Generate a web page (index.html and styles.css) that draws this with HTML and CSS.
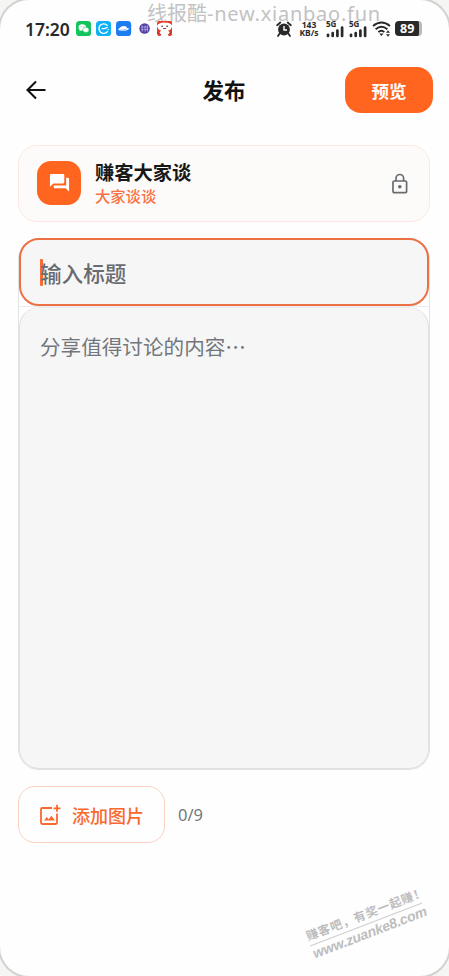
FILE: index.html
```
<!DOCTYPE html>
<html lang="zh-CN">
<head>
<meta charset="utf-8">
<title>发布</title>
<link rel="stylesheet" href="styles.css">
</head>
<body>
<div class="screen">
  <div class="site-mark">线报酷<span>-new.xianbao.fun</span></div>
  <div class="status">
    <span class="clock">17:20</span>
    <div class="apps">
      <svg viewBox="0 0 15 15"><rect width="15" height="15" rx="3.5" fill="#12c45b"/><ellipse cx="6.2" cy="6.3" rx="3.7" ry="3" fill="#fff"/><path d="M4 8l-.5 2 2-1z" fill="#fff"/><ellipse cx="9.7" cy="8.7" rx="3.1" ry="2.6" fill="#fff" stroke="#12c45b" stroke-width=".5"/><circle cx="5" cy="5.7" r=".45" fill="#12c45b"/><circle cx="7.5" cy="5.7" r=".45" fill="#12c45b"/></svg>
      <svg viewBox="0 0 15 15"><rect width="15" height="15" rx="3.5" fill="#10b0f5"/><path d="M11 4.200A4.700 4.700 0 1 0 11.300 10.500M6 7.500h2l3-1" fill="none" stroke="#fff" stroke-width="1.400" stroke-linecap="round"/><circle cx="12" cy="8.500" r=".7" fill="#fff"/></svg>
      <svg viewBox="0 0 15 15"><rect width="15" height="15" rx="3.5" fill="#1c7df2"/><path d="M2 8.500C4 6 6 5 8 5q2.500 0 3 2l2 .5c-1 2.500-8 3.500-11 1z" fill="#fff"/><path d="M4.500 8.800c3 .6 5 0 6-1" fill="none" stroke="#1c7df2" stroke-width=".6"/></svg>
      <svg viewBox="0 0 15 15"><circle cx="7.500" cy="7.500" r="5.200" fill="#5443a7"/><path d="M5.200 4.500v6M4 6h2.500M4 8.500h2.500M8 4.500v6M10.300 4.500v6M7 6h4.300M7 8.500h4" stroke="#cfc6f0" stroke-width=".6"/></svg>
      <svg viewBox="0 0 15 15"><path d="M2 0h11q2 0 2 3v9q0 3-3 3H3q-3 0-3-3V3q0-3 2-3z" fill="#e63a2c"/><path d="M0 5Q1 1.500 7.500 1.500T15 5Q14 9 11 9.500l2 2.500-2 3H4l-2-3 2-2.500Q1 9 0 5z" fill="#fff"/><circle cx="5" cy="5.200" r=".8" fill="#222"/><circle cx="10" cy="5.200" r=".8" fill="#222"/><path d="M6 7.500h3M1 11l3 3M14 11l-3 3" stroke="#c62d25"/></svg>
    </div>
    <div class="system">
      <svg class="alarm" viewBox="0 0 16 16"><circle cx="8" cy="8.500" r="5.900" fill="#292929"/><path d="M1.200 4.200L4.300 1.500M14.800 4.200L11.700 1.500M3.700 12.500L2 15M12.300 12.500L14 15" stroke="#292929" stroke-width="1.800" stroke-linecap="round"/><path d="M8 5v4h3" fill="none" stroke="#fff" stroke-width="1.400"/></svg>
      <div class="speed"><span>143</span><span>KB/s</span></div>
      <div class="signal"><span>5G</span><svg viewBox="0 0 18 12"><path d="M2 8.800v1.200M6.700 7v3M11.400 4.500V10M16.100 1.500V10" stroke="#292929" stroke-width="2.700" stroke-linecap="round"/></svg></div>
      <div class="signal"><span>5G</span><svg viewBox="0 0 18 12"><path d="M2 8.800v1.200M6.700 7v3M11.400 4.500V10M16.100 1.500V10" stroke="#292929" stroke-width="2.700" stroke-linecap="round"/></svg></div>
      <svg class="wifi" viewBox="0 0 19 16"><path d="M1 5q8.500-7 17 0M3.600 8.200q5.900-5 11.800 0M6.300 11.100q3.200-2.600 6 0" fill="none" stroke="#292929" stroke-width="1.900"/><path d="M7.300 12.600h4.200L9.400 15zM14 11.800h4L16 9.300zM14 13.200h4L16 15.700z" fill="#292929"/></svg>
      <div class="battery">89</div>
    </div>
  </div>

  <header class="header">
    <svg class="back" viewBox="0 0 22 22"><path d="M20.500 11H3M11 2.500L2.500 11l8.500 8.500" fill="none" stroke="#111" stroke-width="2.100"/></svg>
    <h1>发布</h1>
    <button class="preview">预览</button>
  </header>

  <main class="content">
    <section class="board">
      <div class="board-icon"><svg viewBox="0 0 22 22"><path d="M2.200 1h12.600q1.200 0 1.200 1.200v7.600q0 1.200-1.200 1.200H4.500L1 14.500V2.200Q1 1 2.200 1z" fill="#fff"/><path d="M18 5h1.800Q21 5 21 6.200V19.500L17.500 16H6.200Q5 16 5 14.800V13h13z" fill="#fff"/></svg></div>
      <div class="board-text"><strong>赚客大家谈</strong><span>大家谈谈</span></div>
      <svg class="lock" viewBox="0 0 18 22"><rect x="2" y="8" width="13.600" height="11.700" rx="1.200"/><path d="M5 8V5.300a3.800 3.800 0 0 1 7.600 0V8"/><circle cx="8.800" cy="13.800" r="1.800"/></svg>
    </section>
    <section class="editor">
      <div class="title-field"><span class="caret"></span><span>输入标题</span></div>
      <div class="divider"></div>
      <div class="body-field">分享值得讨论的内容<span class="dots">⋯</span></div>
    </section>
    <div class="attach">
      <button class="add"><svg viewBox="0 0 22 22"><path d="M13 4H3.200Q2 4 2 5.200v13.600Q2 20 3.200 20h13.600q1.200 0 1.200-1.200V9.500" fill="none" stroke="#f9682d" stroke-width="1.800"/><path d="M18 .8v7M14.500 4.300h7" stroke="#f9682d" stroke-width="1.800"/><path d="M5 16.500l2.700-3.600 2 2.400 2.800-3.500 3.500 4.700z" fill="#f9682d"/></svg>添加图片</button>
      <span class="count">0/9</span>
    </div>
  </main>
  <div class="stamp"><div class="stamp-top">赚客吧，有奖一起赚！</div><div class="stamp-url">www.zuanke8.com</div></div>
</div>
</body>
</html>
```
FILE: styles.css
```
* { box-sizing: border-box; }
body {
  margin: 0;
  background: #f5f5f4;
  font-family: "Noto Sans", "Noto Sans CJK SC", sans-serif;
}
button { font-family: inherit; margin: 0; padding: 0; }
svg { display: block; flex: none; }
.screen {
  position: relative;
  width: 449px;
  height: 976px;
  overflow: hidden;
  background: #fefefe;
  border-radius: 29px;
  box-shadow: 0 0 0 2px #d2d2d2;
}
.site-mark {
  position: absolute;
  left: 147px;
  top: 0;
  color: #c2c2c3;
  font-size: 20px;
  line-height: 28px;
  white-space: nowrap;
}
.site-mark span { letter-spacing: 0.750px; }
.status {
  position: relative;
  display: flex;
  align-items: center;
  height: 57px;
  padding: 0 27px 0 25px;
}
.clock { width: 51px; font-size: 17.500px; font-weight: 600; color: #292929; }
.apps { display: flex; gap: 5px; }
.apps svg { width: 15.200px; height: 15.200px; }
.system { display: flex; align-items: center; margin-left: auto; color: #292929; }
.alarm { width: 16px; height: 16px; }
.speed {
  display: flex;
  flex-direction: column;
  align-items: center;
  width: 20px;
  margin: 0 7px;
  font-size: 8.500px;
  line-height: 8px;
  font-weight: 700;
}
.signal { width: 18px; height: 18px; margin-right: 5px; }
.signal span { display: block; height: 6px; font-size: 8px; line-height: 7px; font-weight: 700; }
.signal svg { width: 18px; height: 12px; }
.wifi { width: 19px; height: 16px; margin-right: 4px; }
.battery {
  width: 27px;
  height: 15px;
  padding-left: 5px;
  border-right: 3px solid #b9b9b9;
  border-radius: 4px;
  background: #292929;
  color: #fff;
  font-size: 12.500px;
  line-height: 15px;
  font-weight: 700;
}
.header {
  display: grid;
  grid-template-columns: 88px 1fr 88px;
  align-items: center;
  height: 66px;
  padding: 0 16px 0 25px;
}
.back { width: 22px; height: 22px; }
h1 { margin: 1px 0 0 -10px; text-align: center; font-size: 21.500px; line-height: 28px; font-weight: 700; color: #111; }
.preview {
  height: 46px;
  border: 0;
  border-radius: 16px;
  background: #ff651f;
  color: #fff;
  font-size: 17.500px;
  font-weight: 600;
}
.content { padding: 22px 19px 0 18px; }
.board {
  display: flex;
  align-items: center;
  height: 77px;
  padding: 0 20px 0 18px;
  border: 1.500px solid #fce8e1;
  border-radius: 19px;
  background: #fdfbfa;
}
.board-icon {
  display: grid;
  place-items: center;
  width: 44px;
  height: 44px;
  margin-bottom: 1px;
  border-radius: 14px;
  background: #ff651f;
}
.board-icon svg { width: 21px; height: 21px; }
.board-text { display: flex; flex-direction: column; flex: 1; margin: 1px 0 0 14px; }
.board-text strong { font-size: 19.300px; line-height: 24px; font-weight: 700; color: #171717; }
.board-text span { font-size: 15.300px; line-height: 22px; font-weight: 500; color: #f87343; }
.lock { width: 18px; height: 22px; fill: none; stroke: #686b6f; stroke-width: 1.700; }
.lock circle { fill: #686b6f; stroke: none; }
.editor { margin-top: 16px; border: 1px solid #e2e3e5; border-top-color: transparent; border-radius: 21px; }
.title-field {
  display: flex;
  align-items: center;
  height: 68px;
  margin-top: -1px;
  padding: 0 0 0 19px;
  border: 2px solid #eb7043;
  border-radius: 20px;
  background: #f6f6f6;
  color: #686b70;
  font-size: 21.600px;
  font-weight: 500;
}
.caret { width: 3px; height: 27px; margin-right: -3px; border-radius: 1px; background: #f86b32; }
.divider { height: 1px; background: #ececee; }
.body-field {
  height: 462px;
  padding: 24px 20px;
  border: 1px solid #e0e1e2;
  border-top-color: #ebebec;
  border-radius: 20px;
  background: #f6f6f6;
  color: #73767a;
  font-size: 20.600px;
  line-height: 30px;
}
.attach { display: flex; align-items: center; gap: 13px; margin-top: 16px; }
.add {
  display: flex;
  align-items: center;
  gap: 11px;
  width: 147px;
  height: 57px;
  padding-left: 20px;
  border: 1.500px solid #fbd2c2;
  border-radius: 17px;
  background: #fefefe;
  color: #f9682d;
  font-size: 18px;
  font-weight: 500;
}
.add svg { width: 22px; height: 22px; }
.count { color: #74777a; font-size: 16.500px; }
.stamp {
  position: absolute;
  left: 306px;
  top: 907px;
  width: 120px;
  color: #bdbdbd;
  font-weight: 700;
  white-space: nowrap;
  transform: rotate(-21deg);
}
.stamp-top { height: 18px; border-bottom: 1px solid #cfcfcf; font-size: 12px; line-height: 15px; letter-spacing: 0.700px; }
.stamp-url { font-size: 14px; line-height: 16px; font-family: "Liberation Sans", sans-serif; font-style: italic; letter-spacing: -0.200px; }
```
